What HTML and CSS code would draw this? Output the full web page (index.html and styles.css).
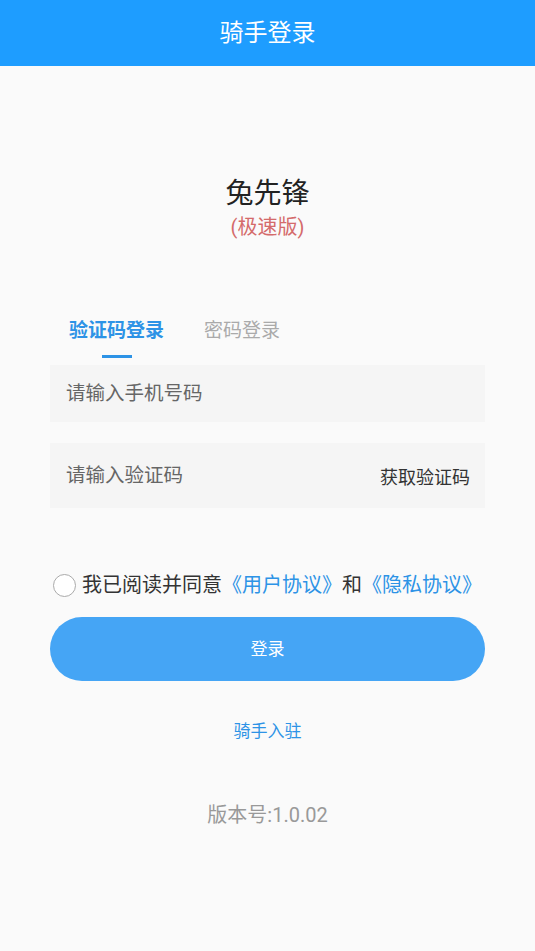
FILE: index.html
```html
<!DOCTYPE html>
<html lang="zh-CN">
<head>
    <meta charset="UTF-8">
    <meta name="viewport" content="width=device-width, initial-scale=1.0">
    <title>骑手登录</title>
    <link rel="stylesheet" href="styles.css">
</head>
<body>
    <header class="topbar">骑手登录</header>

    <main class="page">
        <div class="brand">
            <div class="brand-name">兔先锋</div>
            <div class="brand-sub">(极速版)</div>
        </div>

        <div class="tabs">
            <div class="tab active">
                <span>验证码登录</span>
                <i class="tab-line"></i>
            </div>
            <div class="tab">
                <span>密码登录</span>
            </div>
        </div>

        <form class="login-form">
            <div class="field">
                <input type="tel" placeholder="请输入手机号码">
            </div>
            <div class="field field-code">
                <input type="text" placeholder="请输入验证码">
                <span class="get-code">获取验证码</span>
            </div>

            <label class="agree">
                <span class="radio"></span>
                <span>我已阅读并同意<a class="link">《用户协议》</a>和<a class="link">《隐私协议》</a></span>
            </label>

            <button type="button" class="btn-login">登录</button>
        </form>

        <a class="join">骑手入驻</a>
        <div class="version">版本号:1.0.02</div>
    </main>
</body>
</html>
```

FILE: styles.css
```css
body {
    margin: 0;
    padding: 0;
    background-color: #fafafa;
    font-family: Roboto, "Noto Sans CJK SC", sans-serif;
    color: #333;
}
.topbar {
    height: 66px;
    line-height: 66px;
    background-color: #1e9dff;
    color: #fff;
    font-size: 24px;
    text-align: center;
}
.page {
    display: flex;
    flex-direction: column;
    padding: 0 50px;
}
.brand {
    margin-top: 110px;
    text-align: center;
}
.brand-name {
    font-size: 28px;
    line-height: 36px;
    color: #222;
}
.brand-sub {
    font-size: 20px;
    line-height: 30px;
    color: #d46b6b;
}
.tabs {
    display: flex;
    gap: 40px;
    margin-top: 74px;
    padding-left: 19px;
}
.tab {
    display: flex;
    flex-direction: column;
    align-items: center;
    font-size: 19px;
    line-height: 30px;
    color: #aaa;
}
.tab.active {
    color: #2d93e6;
    font-weight: bold;
}
.tab-line {
    width: 30px;
    height: 3px;
    margin-top: 9px;
    background-color: #2d93e6;
}
.login-form {
    display: flex;
    flex-direction: column;
    margin-top: 7px;
}
.field {
    display: flex;
    align-items: center;
    height: 57px;
    padding: 0 15px 0 16px;
    background-color: #f5f5f5;
}
.field-code {
    height: 65px;
    margin-top: 21px;
}
.field input {
    flex: 1;
    min-width: 0;
    border: none;
    outline: none;
    background: transparent;
    padding: 0;
    font-family: inherit;
    font-size: 19.5px;
    color: #333;
}
.field input::placeholder {
    color: #666;
}
.get-code {
    font-size: 18px;
    color: #333;
}
.agree {
    display: flex;
    align-items: center;
    gap: 6px;
    margin-top: 62px;
    padding-left: 3px;
    font-size: 20px;
    line-height: 30px;
    color: #333;
}
.radio {
    width: 21px;
    height: 21px;
    border: 1.5px solid #aaa;
    border-radius: 50%;
    background-color: #fff;
}
.link {
    color: #2d93e6;
}
.btn-login {
    height: 64px;
    margin-top: 17px;
    border: none;
    border-radius: 32px;
    background-color: #45a5f5;
    color: #fff;
    font-family: inherit;
    font-size: 17px;
    padding-bottom: 4px;
}
.join {
    margin-top: 35px;
    text-align: center;
    font-size: 17px;
    line-height: 30px;
    color: #2d93e6;
}
.version {
    margin-top: 54px;
    text-align: center;
    font-size: 20px;
    line-height: 30px;
    color: #999;
}
```
